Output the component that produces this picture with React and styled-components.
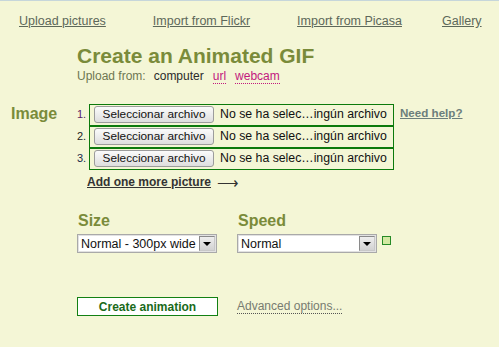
import styled, { createGlobalStyle } from 'styled-components';

const GlobalStyle = createGlobalStyle`
  html, body {
    margin: 0;
    padding: 0;
    background: #f4f6d6;
  }
  body {
    font-family: "Liberation Sans", Arial, sans-serif;
    border-top: 1px solid #c6d6da;
    min-height: 346px;
  }
`

const Nav = styled.nav`
  display: flex;
  padding: 13px 0 0 19px;
  font-size: 12.5px;
  line-height: 15px;
`
const NavLink = styled.a`
  color: #5d685a;
  text-decoration: underline;
  margin-left: ${(p) => p.offset || '0'};
`

const Header = styled.header`
  margin: 15px 0 0 77px;
`
const Title = styled.h1`
  margin: 0;
  font-size: 21px;
  line-height: 24px;
  font-weight: bold;
  color: #7a8b3a;
`
const UploadFrom = styled.div`
  margin-top: 1px;
  font-size: 12px;
  line-height: 15px;
  color: #6e7752;
  display: flex;
  gap: 8px;
`
const Source = styled.span`
  color: ${(p) => (p.active ? '#2a2a2a' : '#c2187e')};
  border-bottom: ${(p) => (p.active ? 'none' : '1px dotted #c2187e')};
  line-height: 14px;
  margin-left: ${(p) => (p.active ? '0' : '1px')};
`

const Section = styled.section`
  display: flex;
  align-items: flex-start;
  margin-top: 20px;
`
const Label = styled.h2`
  margin: 0;
  width: ${(p) => p.width || 'auto'};
  padding-left: ${(p) => p.indent || '0'};
  box-sizing: border-box;
  font-size: 16px;
  line-height: 19px;
  font-weight: bold;
  color: #7a8b3a;
`
const FileList = styled.div`
  display: flex;
  flex-direction: column;
`
const FileRow = styled.div`
  display: flex;
  align-items: center;
`
const Num = styled.span`
  width: 12px;
  font-size: 11px;
  color: ${(p) => p.color};
  margin-top: -3px;
`
const FileBox = styled.div`
  width: 305px;
  height: 22px;
  box-sizing: border-box;
  border: 1px solid #0c7a0c;
  display: flex;
  align-items: flex-start;
  padding: 1px 0 0 4px;
`
const FileButton = styled.button`
  width: 120px;
  height: 17px;
  padding: 0;
  border: 1px solid #9c9c9c;
  border-radius: 3px;
  background: linear-gradient(#fbfbfb, #dedede);
  font-family: "Liberation Sans", Arial, sans-serif;
  font-size: 11.8px;
  color: #111;
  line-height: 15px;
`
const FileName = styled.span`
  margin-left: 6px;
  font-size: 12.3px;
  line-height: 17px;
  color: #111;
  white-space: nowrap;
`
const Help = styled.a`
  margin: 2px 0 0 6px;
  font-size: 11.6px;
  font-weight: bold;
  color: #6c7e7c;
  text-decoration: underline;
`

const AddMore = styled.div`
  margin: 5px 0 0 87px;
  font-size: 12px;
  line-height: 15px;
  font-weight: bold;
  color: #333;
  display: flex;
  align-items: center;
  gap: 6px;
`
const AddLink = styled.a`
  text-decoration: underline;
  color: #333;
`
const Arrow = styled.span`
  font-weight: normal;
  font-size: 15px;
  line-height: 15px;
`

const Options = styled.div`
  display: flex;
  gap: 20px;
  margin: 21px 0 0 77px;
`
const Field = styled.div`
  display: flex;
  flex-direction: column;
  gap: 4px;
  padding-left: 1px;
`
const SelectRow = styled.div`
  display: flex;
  align-items: flex-start;
  gap: 5px;
  margin-left: -1px;
`
const Select = styled.div`
  width: 140px;
  height: 19px;
  box-sizing: border-box;
  background: #fff;
  border: 1px solid #a9a9a9;
  box-shadow: inset 0 0 0 1px #e2e2e2;
  display: flex;
  align-items: center;
  justify-content: space-between;
  padding: 0 1px 0 3px;
  font-size: 12.5px;
  color: #111;
`
const SelectArrow = styled.span`
  width: 16px;
  height: 15px;
  box-sizing: border-box;
  border: 1px solid #8a8a8a;
  border-right-color: #c8c8c8;
  border-bottom-color: #c8c8c8;
  background: linear-gradient(#eeeeee, #d2d2d2);
  display: flex;
  align-items: center;
  justify-content: center;
  &::after {
    content: '';
    border-left: 4px solid transparent;
    border-right: 4px solid transparent;
    border-top: 4px solid #000;
    margin-top: 1px;
  }
`
const Swatch = styled.span`
  width: 9px;
  height: 9px;
  box-sizing: border-box;
  margin-top: 2px;
  background: #d3e9a2;
  border: 1px solid #268a26;
`

const Actions = styled.div`
  display: flex;
  align-items: center;
  gap: 19px;
  margin: 44px 0 0 77px;
`
const CreateButton = styled.button`
  width: 141px;
  height: 19px;
  padding: 0;
  background: #fff;
  border: 1px solid #138013;
  font-family: "Liberation Sans", Arial, sans-serif;
  font-size: 12px;
  font-weight: bold;
  color: #1a6a1a;
`
const Advanced = styled.a`
  font-size: 12px;
  line-height: 14px;
  color: #777b70;
  border-bottom: 1px dotted #555;
`

const files = [
  { n: '1.', color: '#5a1a6a' },
  { n: '2.', color: '#222' },
  { n: '3.', color: '#1a2a4a' },
]

function App() {
  return (
    <>
      <GlobalStyle />
      <Nav>
        <NavLink>Upload pictures</NavLink>
        <NavLink offset="47px">Import from Flickr</NavLink>
        <NavLink offset="47px">Import from Picasa</NavLink>
        <NavLink offset="40px">Gallery</NavLink>
      </Nav>
      <Header>
        <Title>Create an Animated GIF</Title>
        <UploadFrom>
          <span>Upload from:</span>
          <Source active>computer</Source>
          <Source>url</Source>
          <Source>webcam</Source>
        </UploadFrom>
      </Header>
      <Section>
        <Label width="77px" indent="11px">Image</Label>
        <FileList>
          {files.map((f) => (
            <FileRow key={f.n}>
              <Num color={f.color}>{f.n}</Num>
              <FileBox>
                <FileButton>Seleccionar archivo</FileButton>
                <FileName>No se ha selec…ingún archivo</FileName>
              </FileBox>
            </FileRow>
          ))}
        </FileList>
        <Help>Need help?</Help>
      </Section>
      <AddMore>
        <AddLink>Add one more picture</AddLink>
        <Arrow>⟶</Arrow>
      </AddMore>
      <Options>
        <Field>
          <Label>Size</Label>
          <SelectRow>
            <Select>
              <span>Normal - 300px wide</span>
              <SelectArrow />
            </Select>
          </SelectRow>
        </Field>
        <Field>
          <Label>Speed</Label>
          <SelectRow>
            <Select>
              <span>Normal</span>
              <SelectArrow />
            </Select>
            <Swatch />
          </SelectRow>
        </Field>
      </Options>
      <Actions>
        <CreateButton>Create animation</CreateButton>
        <Advanced>Advanced options...</Advanced>
      </Actions>
    </>
  );
}

export default App;
